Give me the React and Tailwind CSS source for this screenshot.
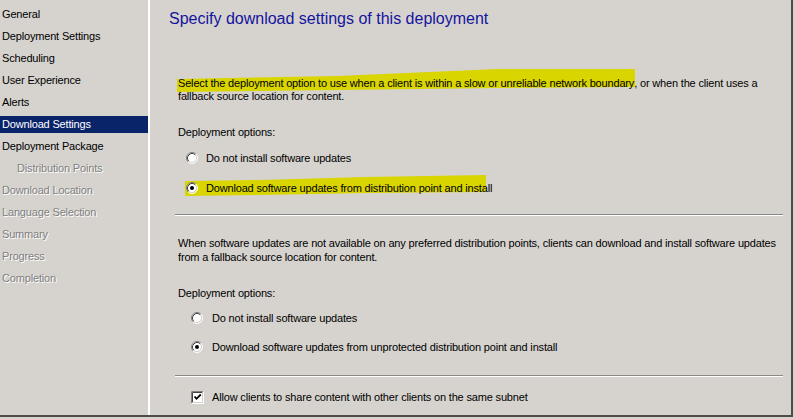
import React from "react";

const FONT = { fontFamily: '"Liberation Sans", Arial, sans-serif' };

function Radio({ checked }) {
  return (
    <svg width="12" height="12" viewBox="0 0 12 12" className="shrink-0">
      <circle cx="6" cy="6" r="5" fill="#ffffff" />
      <path d="M2.11 9.89 A5.5 5.5 0 0 1 9.89 2.11" stroke="#808080" fill="none" strokeWidth="1" />
      <path d="M9.89 2.11 A5.5 5.5 0 0 1 2.11 9.89" stroke="#ffffff" fill="none" strokeWidth="1" />
      <path d="M2.82 9.18 A4.5 4.5 0 0 1 9.18 2.82" stroke="#404040" fill="none" strokeWidth="1" />
      <path d="M9.18 2.82 A4.5 4.5 0 0 1 2.82 9.18" stroke="#d4d0c8" fill="none" strokeWidth="1" />
      {checked && <circle cx="6" cy="6" r="2" fill="#000000" />}
    </svg>
  );
}

function Checkbox() {
  return (
    <svg width="13" height="13" viewBox="0 0 13 13" className="shrink-0">
      <rect x="0" y="0" width="13" height="13" fill="#ffffff" />
      <path d="M0.5 12.5 V0.5 H12.5" stroke="#808080" fill="none" />
      <path d="M1.5 11.5 V1.5 H11.5" stroke="#404040" fill="none" />
      <path d="M0.5 12.5 H12.5 V0.5" stroke="#ffffff" fill="none" />
      <path d="M1.5 11.5 H11.5 V1.5" stroke="#d4d0c8" fill="none" />
      <path d="M3.5 5.5 L5.5 7.8 L9.8 3.5" stroke="#000000" strokeWidth="1.8" fill="none" />
    </svg>
  );
}

function Separator() {
  return (
    <div className="ml-[25px] mr-[8px] h-[2px] flex flex-col">
      <div className="h-px bg-[#8a8884]" />
      <div className="h-px bg-[#ffffff]" />
    </div>
  );
}

const navItems = [
  { label: "General", state: "normal" },
  { label: "Deployment Settings", state: "normal" },
  { label: "Scheduling", state: "normal" },
  { label: "User Experience", state: "normal" },
  { label: "Alerts", state: "normal" },
  { label: "Download Settings", state: "selected" },
  { label: "Deployment Package", state: "normal" },
  { label: "Distribution Points", state: "disabled", indent: true },
  { label: "Download Location", state: "disabled" },
  { label: "Language Selection", state: "disabled" },
  { label: "Summary", state: "disabled" },
  { label: "Progress", state: "disabled" },
  { label: "Completion", state: "disabled" },
];

export default function App() {
  return (
    <div
      className="w-[795px] h-[419px] bg-[#d6d3ce] overflow-hidden text-[11px] tracking-[-0.17px] text-black"
      style={FONT}
    >
      <div className="w-[793px] h-[417px] flex border-r-2 border-b-2 border-[#4e4c48]">
        {/* Sidebar */}
        <div className="w-[148px] shrink-0 pt-[3px] flex flex-col">
          {navItems.map((it) => (
            <div key={it.label} className="h-[22px] flex items-center">
              {it.state === "selected" ? (
                <div className="w-full h-[17px] flex items-center bg-[#0a246a] text-white pl-[2px]">
                  {it.label}
                </div>
              ) : it.state === "disabled" ? (
                <div
                  className={`text-[#808080] [text-shadow:1px_1px_0_#ffffff] ${it.indent ? "pl-[17px]" : "pl-[2px]"}`}
                >
                  {it.label}
                </div>
              ) : (
                <div className="pl-[2px]">{it.label}</div>
              )}
            </div>
          ))}
        </div>
        <div className="w-[2px] shrink-0 bg-white" />
        {/* Main */}
        <div className="flex-1 flex flex-col">
          <div className="h-[38px] flex items-center pl-[19px] text-[16px] tracking-normal text-[#14149f] whitespace-nowrap">
            Specify download settings of this deployment
          </div>

          <div className="mt-[39px] pl-[28px] leading-[13px] whitespace-nowrap">
            <span className="relative inline-block">
              <svg
                className="absolute left-[-1px] top-[-8px] w-[calc(100%+2px)] h-[23px]"
                viewBox="0 0 100 23"
                preserveAspectRatio="none"
              >
                <polygon points="0,10 35,7 70,0 100,0 100,18 70,19 35,21 0,23" fill="#d9d500" />
              </svg>
              <span className="relative">
                Select the deployment option to use when a client is within a slow or unreliable network boundary
              </span>
            </span>
            , or when the client uses a
            <br />
            fallback source location for content.
          </div>

          <div className="mt-[19px] h-[20px] flex items-center pl-[28px]">Deployment options:</div>

          <div className="mt-[6px] h-[20px] flex items-center pl-[36px] gap-[8px] whitespace-nowrap">
            <Radio />
            <span>Do not install software updates</span>
          </div>

          <div className="mt-[10px] h-[20px] flex items-center pl-[35px] whitespace-nowrap">
            <span className="relative inline-flex items-center gap-[8px] pl-px">
              <svg
                className="absolute left-0 top-[-5px] w-[calc(100%-6px)] h-[21px]"
                viewBox="0 0 100 21"
                preserveAspectRatio="none"
              >
                <polygon points="0,6 25,5 60,2 100,0 100,17 60,18 25,20 0,21" fill="#d9d500" />
              </svg>
              <span className="relative flex">
                <Radio checked />
              </span>
              <span className="relative">Download software updates from distribution point and install</span>
            </span>
          </div>

          <div className="mt-[16px]">
            <Separator />
          </div>

          <div className="mt-[20px] pl-[28px] leading-[14px] whitespace-nowrap">
            When software updates are not available on any preferred distribution points, clients can download and install software updates
            <br />
            from a fallback source location for content.
          </div>

          <div className="mt-[19px] h-[20px] flex items-center pl-[28px]">Deployment options:</div>

          <div className="mt-[5px] h-[20px] flex items-center pl-[41px] gap-[9px] whitespace-nowrap">
            <Radio />
            <span>Do not install software updates</span>
          </div>

          <div className="mt-[9px] h-[20px] flex items-center pl-[41px] gap-[9px] whitespace-nowrap">
            <Radio checked />
            <span>Download software updates from unprotected distribution point and install</span>
          </div>

          <div className="mt-[18px]">
            <Separator />
          </div>

          <div className="mt-[10px] h-[20px] flex items-center pl-[41px] gap-[8px] whitespace-nowrap">
            <Checkbox />
            <span>Allow clients to share content with other clients on the same subnet</span>
          </div>
        </div>
      </div>
    </div>
  );
}
